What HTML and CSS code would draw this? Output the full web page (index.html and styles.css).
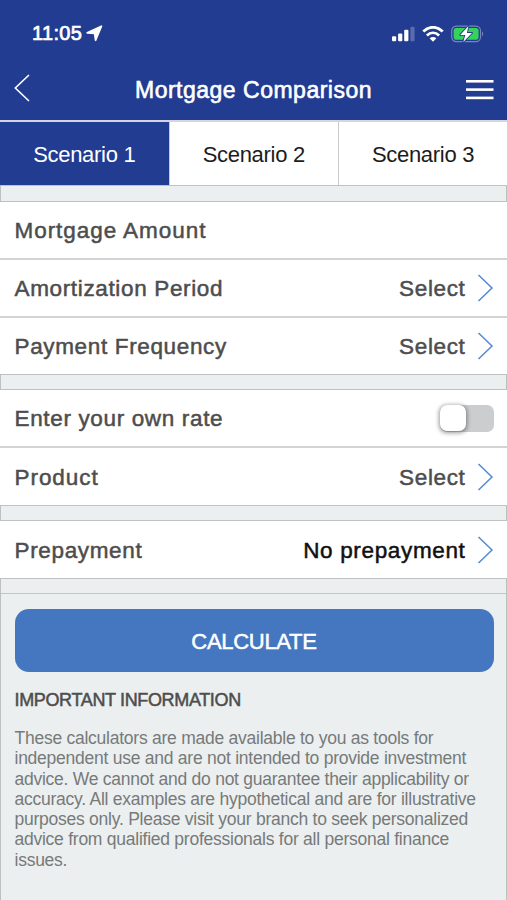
FILE: index.html
```html
<!DOCTYPE html>
<html lang="en">
<head>
<meta charset="utf-8">
<title>Mortgage Comparison</title>
<link rel="stylesheet" href="styles.css">
</head>
<body>
<header class="header">
  <div class="status">
    <span class="time">11:05</span>
    <svg class="location" width="17" height="17" viewBox="0 0 17 17"><path d="M15.4 1.2 9.6 15.2 8.6 8.4 1.3 7.8Z" fill="#fff" stroke="#fff" stroke-width="1.8" stroke-linejoin="round"/></svg>
    <svg class="signal" width="23" height="16" viewBox="0 0 23 16" fill="#fff"><rect x="0" y="10.2" width="4.2" height="5" rx="1"/><rect x="6.1" y="7.4" width="4.2" height="7.8" rx="1"/><rect x="12.2" y="3.7" width="4.2" height="11.5" rx="1"/><rect x="18.4" y=".8" width="4.2" height="14.4" rx="1" opacity=".25"/></svg>
    <svg class="wifi" width="22" height="16" viewBox="0 0 22 16" fill="none" stroke="#fff" stroke-width="2.8"><path d="M1.3 5.6C7-.2 15-.2 20.7 5.6"/><path d="M4.9 9.4C8.6 5.9 13.4 5.9 17.1 9.4"/><path d="M7.6 12.3Q11 9.6 14.4 12.3L11 15.7Z" fill="#fff" stroke="none"/></svg>
    <svg class="battery" width="33" height="18" viewBox="0 0 33 18"><rect x=".7" y="1.2" width="28.8" height="15.4" rx="4.6" fill="none" stroke="#7586bd" stroke-width="1.2"/><rect x="2.6" y="3.1" width="25" height="11.6" rx="2.8" fill="#35d35a"/><path d="M31 6.3Q33.4 8.9 31 11.5Z" fill="#7586bd"/><path d="M17.4 1 9.2 9.9H14.3L12.3 17 21 7.9H15.9Z" fill="#fff" stroke="#213c91" stroke-width="1.8" paint-order="stroke" stroke-linejoin="round"/></svg>
  </div>
  <div class="navbar">
    <svg class="back" width="17" height="28" viewBox="0 0 17 28" fill="none" stroke="#fff" stroke-width="1.6"><path d="M15 1 1.3 14 15 27"/></svg>
    <h1 class="title">Mortgage Comparison</h1>
    <svg class="menu" width="28" height="20" viewBox="0 0 28 20" fill="#fff"><rect y="0" width="27.5" height="2.6"/><rect y="8.3" width="27.5" height="2.6"/><rect y="16.6" width="27.5" height="2.6"/></svg>
  </div>
</header>
<nav class="tabs">
  <div class="tab active">Scenario 1</div>
  <div class="tab">Scenario 2</div>
  <div class="tab">Scenario 3</div>
</nav>
<main class="form">
  <section class="group">
    <div class="row"><span class="label wide">Mortgage Amount</span></div>
    <div class="row"><span class="label">Amortization Period</span><span class="value">Select</span><svg class="chevron" width="17" height="28" viewBox="0 0 17 28"><path d="M1.5 1 15 14 1.5 27"/></svg></div>
    <div class="row"><span class="label">Payment Frequency</span><span class="value">Select</span><svg class="chevron" width="17" height="28" viewBox="0 0 17 28"><path d="M1.5 1 15 14 1.5 27"/></svg></div>
  </section>
  <section class="group">
    <div class="row"><span class="label">Enter your own rate</span><span class="toggle"><span class="knob"></span></span></div>
    <div class="row"><span class="label wide">Product</span><span class="value">Select</span><svg class="chevron" width="17" height="28" viewBox="0 0 17 28"><path d="M1.5 1 15 14 1.5 27"/></svg></div>
  </section>
  <section class="group">
    <div class="row"><span class="label">Prepayment</span><span class="value chosen">No prepayment</span><svg class="chevron" width="17" height="28" viewBox="0 0 17 28"><path d="M1.5 1 15 14 1.5 27"/></svg></div>
  </section>
  <section class="footer">
    <button class="calculate">CALCULATE</button>
    <h2 class="info-title">IMPORTANT INFORMATION</h2>
    <p class="info">These calculators are made available to you as tools for<br>independent use and are not intended to provide investment<br>advice. We cannot and do not guarantee their applicability or<br>accuracy. All examples are hypothetical and are for illustrative<br>purposes only. Please visit your branch to seek personalized<br>advice from qualified professionals for all personal finance<br>issues.</p>
  </section>
</main>
</body>
</html>
```
FILE: styles.css
```css
* { box-sizing: border-box; }
body {
  margin: 0;
  height: 900px;
  overflow: hidden;
  display: flex;
  flex-direction: column;
  background: #ebefef;
  font-family: "Liberation Sans", Arial, sans-serif;
  color: #4d4d4d;
}
svg { display: block; flex: none; }
.header { height: 122px; background: #213c91; color: #fff; border-bottom: 2px solid #d3d6e0; flex: none; }
.status { height: 60px; padding: 7px 23px 0 32px; display: flex; align-items: center; }
.time { font-size: 20px; letter-spacing: .35px; -webkit-text-stroke: .7px #fff; }
.location { margin-left: 4px; }
.signal { margin-left: auto; }
.wifi { margin-left: 7px; }
.battery { margin-left: 7px; }
.navbar { height: 60px; padding: 0 13px 0 14px; display: flex; align-items: center; justify-content: space-between; }
.back { margin-top: -4px; }
.title { margin: 0 0 0 10px; font-size: 23px; font-weight: 400; letter-spacing: .5px; -webkit-text-stroke: .6px #fff; }
.tabs { height: 63px; display: grid; grid-template-columns: 169.5px 169.5px 1fr; flex: none; background: #fff; box-shadow: 0 1px #bec2c2; }
.tab { display: flex; align-items: center; justify-content: center; padding-top: 2px; font-size: 22px; letter-spacing: -.3px; color: #1c1c1c; border-right: 1px solid #c8cbcb; }
.tab:last-child { border-right: 0; }
.tab.active { background: #213c91; color: #fff; }
.form { flex: 1; display: flex; flex-direction: column; border: solid #bcc0c0; border-width: 0 1px; }
.group { margin: 0 -1px 14px; border: solid #bec2c2; border-width: 1px 0; background: #fff; }
.group:first-child { margin-top: 16px; }
.row { height: 58px; padding: 0 13px 0 14.5px; display: flex; align-items: center; border-bottom: 2px solid #d2d4d4; }
.row:last-child { border-bottom: 0; height: 57px; }
.group:first-child .row:last-child { height: 56px; }
.label, .value { font-size: 22.5px; letter-spacing: .65px; -webkit-text-stroke: .5px currentColor; padding-top: 2px; white-space: nowrap; }
.label.wide { letter-spacing: .95px; }
.value { margin-left: auto; }
.value.chosen { color: #111; }
.chevron { margin-left: 11.5px; fill: none; stroke: #5688d2; stroke-width: 1.5; }
.toggle { margin-left: auto; width: 54px; height: 27px; border-radius: 7px; background: #cbcdce; display: flex; }
.knob { width: 26px; height: 26px; border-radius: 7px; background: #fff; box-shadow: 0 1px 4px 1px rgba(0,0,0,.4); }
.footer { flex: 1; border-top: 1px solid #c2c6c6; padding: 15px 13.5px; }
.calculate { width: 479px; height: 63px; display: block; border: 0; border-radius: 14px; background: #4577c1; color: #fff; font: 22px "Liberation Sans", Arial, sans-serif; letter-spacing: -.3px; -webkit-text-stroke: .5px #fff; padding: 2px 0 0; }
.info-title { margin: 18px 0 17px; font-size: 18px; line-height: 21px; font-weight: 400; letter-spacing: -.35px; -webkit-text-stroke: .5px currentColor; }
.info { margin: 0; font-size: 17.5px; line-height: 20.3px; letter-spacing: -.25px; color: #777a7a; white-space: nowrap; }
```
